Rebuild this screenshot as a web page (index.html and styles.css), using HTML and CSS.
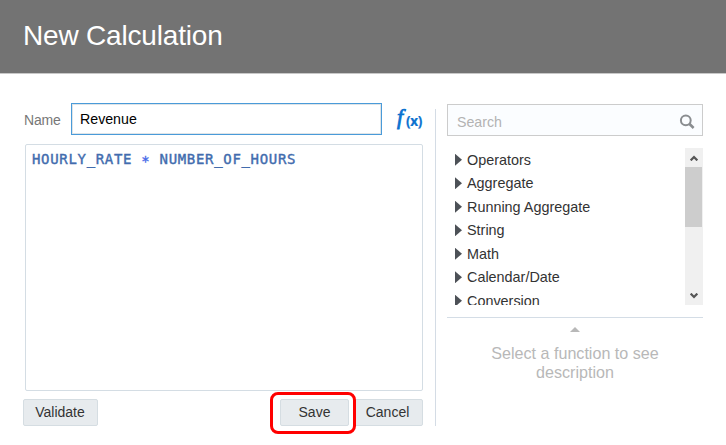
FILE: index.html
```html
<!DOCTYPE html>
<html lang="en">
<head>
<meta charset="utf-8">
<title>New Calculation</title>
<link rel="stylesheet" href="styles.css">
</head>
<body>
<header class="header"><h1>New Calculation</h1></header>
<main class="content">
  <section class="editor">
    <div class="name-row">
      <label class="name-label" for="name">Name</label>
      <input class="name-input" id="name" type="text" value="Revenue">
      <div class="fx"><span class="fx-f">f</span><span class="fx-x">(x)</span></div>
    </div>
    <div class="formula"><span class="token">HOURLY_RATE</span> <span class="operator">*</span> <span class="token">NUMBER_OF_HOURS</span></div>
    <div class="actions">
      <button class="button validate">Validate</button>
      <div class="save-wrap"><button class="button save">Save</button><span class="highlight"></span></div>
      <button class="button cancel">Cancel</button>
    </div>
  </section>
  <section class="functions">
    <div class="search">
      <span>Search</span>
      <svg width="16" height="16" viewBox="0 0 16 16"><circle cx="6.8" cy="6.3" r="4.9" fill="none" stroke="#8a8d90" stroke-width="2"/><path d="M10.3 9.8 14.6 14" stroke="#8a8d90" stroke-width="2.6"/></svg>
    </div>
    <div class="list-area">
      <ul class="list">
        <li>Operators</li>
        <li>Aggregate</li>
        <li>Running Aggregate</li>
        <li>String</li>
        <li>Math</li>
        <li>Calendar/Date</li>
        <li>Conversion</li>
      </ul>
      <div class="scrollbar">
        <div class="scroll-button"><svg width="8" height="6" viewBox="0 0 8 6"><path d="M.7 5.4 4 2 7.3 5.4" fill="none" stroke="#555" stroke-width="2.2"/></svg></div>
        <div class="thumb"></div>
        <div class="scroll-button down"><svg width="8" height="6" viewBox="0 0 8 6"><path d="M.7 .6 4 4 7.3 .6" fill="none" stroke="#555" stroke-width="2.2"/></svg></div>
      </div>
    </div>
    <div class="description">
      <div class="expand"></div>
      <p>Select a function to see description</p>
    </div>
  </section>
</main>
</body>
</html>
```
FILE: styles.css
```css
* { box-sizing: border-box; }
body {
  margin: 0;
  height: 445px;
  overflow: hidden;
  background: #fff;
  color: #333;
  font: 14.4px/20px "Liberation Sans", Arial, sans-serif;
}
.header {
  height: 74px;
  padding: 19px 23px 0;
  background: #737373;
  border-bottom: 1px solid #c8c8c8;
}
h1 {
  margin: 0;
  color: #fff;
  font-size: 28px;
  font-weight: 400;
  line-height: 34px;
  letter-spacing: -0.18px;
}
.content {
  display: flex;
  padding: 29px 23px 0;
}
.editor { width: 400px; }
.name-row {
  display: flex;
  height: 32px;
}
.name-label {
  width: 48px;
  padding: 7px 0 0 1px;
  color: #777;
  font-size: 14px;
  letter-spacing: -0.2px;
}
.name-input {
  width: 311px;
  height: 32px;
  padding: 0 8px;
  border: 1px solid #4a9bd9;
  border-radius: 0;
  outline: none;
  box-shadow: inset 0 0 0 1px #dfe4e7;
  background: #fff;
  color: #000;
  font: inherit;
  font-size: 14.2px;
}
.fx {
  display: flex;
  align-items: baseline;
  padding: 2px 0 0 15px;
  color: #0b72cf;
}
.fx-f {
  width: 9px;
  font: italic 22px/28px "Liberation Serif", serif;
  -webkit-text-stroke: 0.8px #0b72cf;
  transform: translateY(-2px);
}
.fx-x {
  font: bold 13.5px/20px "Open Sans", sans-serif;
  -webkit-text-stroke: 0.2px #0b72cf;
  letter-spacing: -0.3px;
}
.formula {
  width: 398px;
  height: 247px;
  margin: 9px 0 0 2px;
  padding: 4px 6px;
  border: 1px solid #d4dde4;
  border-radius: 2px;
  font: 14px/20px "DejaVu Sans Mono", monospace;
  letter-spacing: 0.68px;
  white-space: pre;
}
.token {
  color: #426cae;
  -webkit-text-stroke: 0.4px #426cae;
}
.operator {
  display: inline-block;
  color: #4668e8;
  -webkit-text-stroke: 0.35px #4668e8;
  transform: translateY(2px);
}
.actions {
  display: flex;
  margin-top: 8px;
}
.button {
  height: 27px;
  padding: 0 1px 1px 0;
  border: 1px solid #d5dde2;
  border-radius: 2px;
  background: #e7ebee;
  color: #333;
  font: inherit;
  font-size: 14px;
}
.validate { width: 75px; }
.save-wrap {
  position: relative;
  margin-left: auto;
}
.save {
  width: 69px;
  padding-left: 1px;
}
.cancel {
  width: 70px;
  margin-left: 4px;
}
.highlight {
  position: absolute;
  top: -7px;
  left: -10px;
  width: 86px;
  height: 42px;
  border: 3px solid #f00;
  border-radius: 8px;
}
.functions {
  width: 268px;
  height: 317px;
  margin: 6px 0 0 12px;
  padding-left: 11px;
  border-left: 1px solid #d4dce5;
}
.search {
  display: flex;
  align-items: center;
  justify-content: space-between;
  height: 32px;
  margin-top: -5px;
  padding: 3px 7px 0 9px;
  border: 1px solid #ccc;
  background: #fbfdff;
  color: #b3b3b3;
  font-size: 14.2px;
}
.list-area {
  display: flex;
  justify-content: space-between;
  height: 157px;
  margin-top: 12px;
  overflow: hidden;
}
.list {
  margin: 0;
  padding: 0 0 0 8px;
  list-style: none;
}
.list li {
  display: flex;
  align-items: center;
  height: 23.5px;
}
.list li::before {
  content: "";
  width: 7px;
  height: 12px;
  margin-right: 5px;
  background: #4d5157;
  clip-path: polygon(0 0, 100% 50%, 0 100%);
}
.scrollbar {
  display: flex;
  flex-direction: column;
  width: 18px;
  background: #f0f0f0;
}
.scroll-button {
  display: flex;
  align-items: center;
  justify-content: center;
  height: 19px;
}
.scroll-button.down { margin-top: auto; }
.thumb {
  width: 17px;
  height: 60px;
  background: #cdcdcd;
}
.description {
  margin-top: 12px;
  padding-top: 9px;
  border-top: 1px solid #d4dde6;
  color: #b8b8b8;
  text-align: center;
}
.expand {
  width: 10px;
  height: 5px;
  margin: 0 auto;
  background: #b8b8b8;
  clip-path: polygon(50% 0, 100% 100%, 0 100%);
}
.description p {
  width: 180px;
  margin: 12px auto 0;
  font-size: 16.1px;
  line-height: 19px;
}
```
